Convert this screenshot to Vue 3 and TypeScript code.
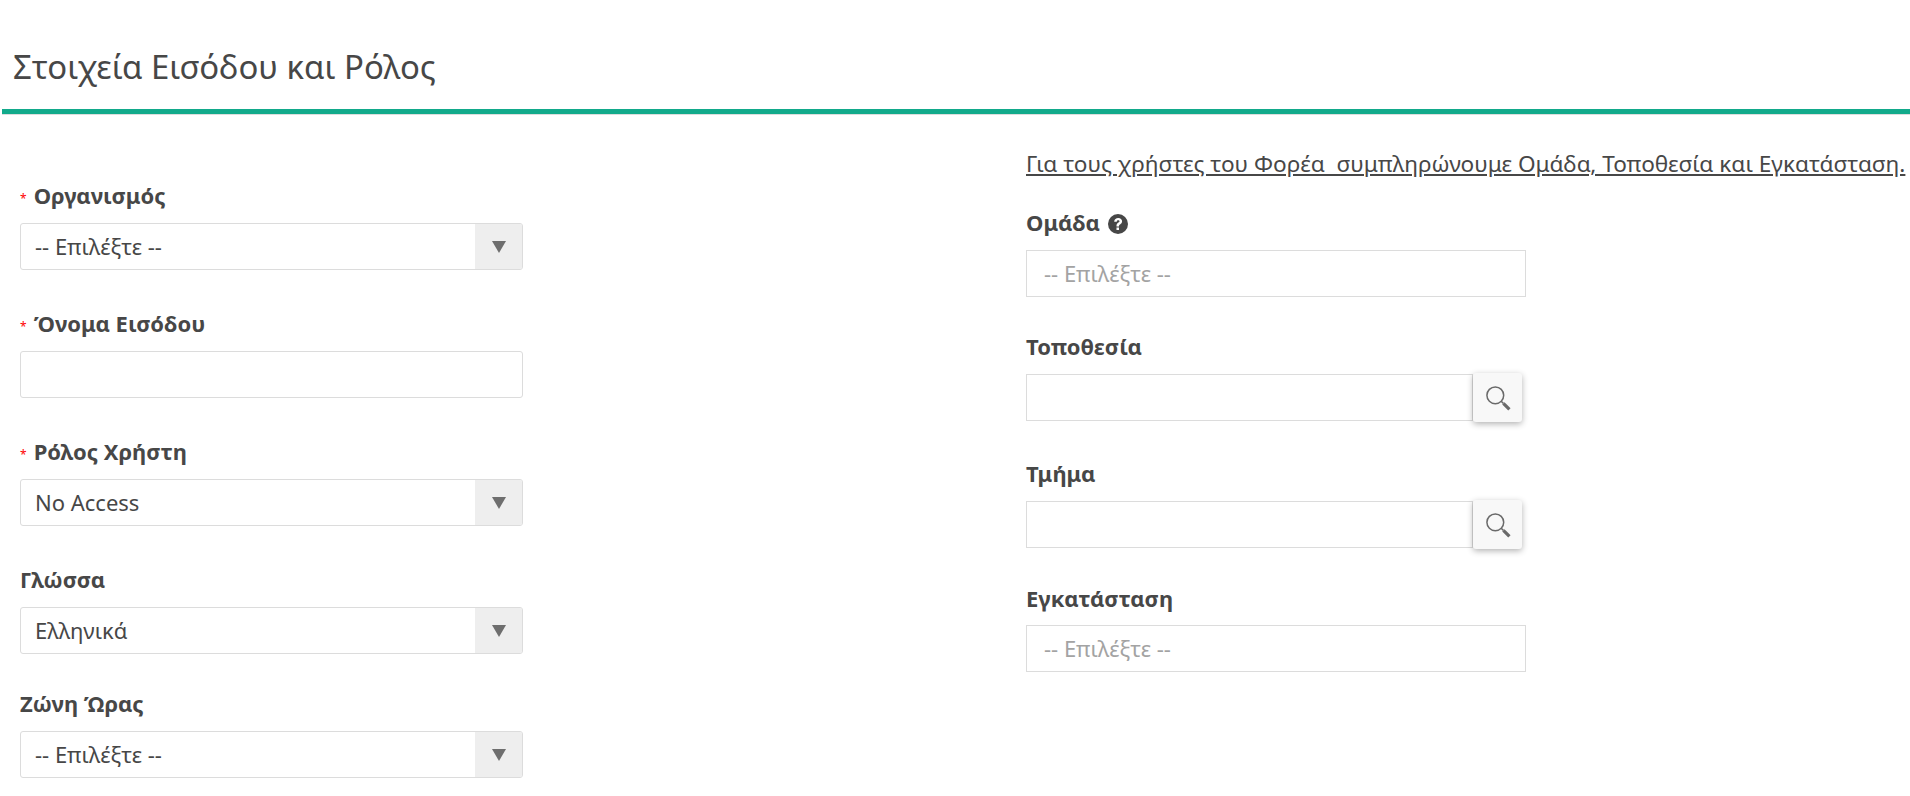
<script setup lang="ts">
const leftFields = [
  { label: 'Οργανισμός', required: true, value: '-- Επιλέξτε --' },
  { label: 'Όνομα Εισόδου', required: true, input: true, value: '' },
  { label: 'Ρόλος Χρήστη', required: true, value: 'No Access' },
  { label: 'Γλώσσα', required: false, value: 'Ελληνικά' },
  { label: 'Ζώνη Ώρας', required: false, value: '-- Επιλέξτε --' },
]
</script>

<template>
  <div class="page">
    <h1 class="title">Στοιχεία Εισόδου και Ρόλος</h1>

    <div class="columns">
      <div class="col-left">
        <div v-for="f in leftFields" :key="f.label" class="field">
          <label class="label"><span v-if="f.required" class="star">*</span>{{ f.label }}</label>
          <input v-if="f.input" class="box" type="text" />
          <div v-else class="box select">
            <span class="select-text">{{ f.value }}</span>
            <span class="select-arrow"><i></i></span>
          </div>
        </div>
      </div>

      <div class="col-right">
        <p class="note">Για τους χρήστες του Φορέα&nbsp; συμπληρώνουμε Ομάδα, Τοποθεσία και Εγκατάσταση.</p>

        <div class="rfield first">
          <label class="label">Ομάδα
            <svg class="help" viewBox="0 0 24 24" width="20" height="20">
              <circle cx="12" cy="12" r="12" fill="#474747" />
              <path d="M7.4 9.2C7.6 6.4 9.7 4.9 12.3 4.9c2.7 0 4.6 1.6 4.6 3.9 0 1.9-1.1 2.9-2.4 3.7-1 .6-1.3 1-1.3 2v.4h-3v-.8c0-1.8.7-2.7 2-3.5 1.1-.7 1.6-1.1 1.6-1.8 0-.8-.6-1.3-1.5-1.3-1 0-1.6.6-1.8 1.7z" fill="#fff" />
              <rect x="10.2" y="16.2" width="3" height="3" fill="#fff" />
            </svg>
          </label>
          <div class="rbox placeholder">-- Επιλέξτε --</div>
        </div>

        <div class="rfield">
          <label class="label">Τοποθεσία</label>
          <div class="lookup">
            <input class="rbox lookup-input" type="text" />
            <button class="lookup-btn" type="button">
              <svg viewBox="0 0 26 26" width="28" height="28" fill="none">
                <circle cx="10.5" cy="10.5" r="7.8" stroke="#6a6a6a" stroke-width="1.4" />
                <path d="M16 16l2 2" stroke="#6a6a6a" stroke-width="1.4" />
                <path d="M18 18l5.6 5.6" stroke="#6a6a6a" stroke-width="3" />
              </svg>
            </button>
          </div>
        </div>

        <div class="rfield third">
          <label class="label">Τμήμα</label>
          <div class="lookup">
            <input class="rbox lookup-input" type="text" />
            <button class="lookup-btn" type="button">
              <svg viewBox="0 0 26 26" width="28" height="28" fill="none">
                <circle cx="10.5" cy="10.5" r="7.8" stroke="#6a6a6a" stroke-width="1.4" />
                <path d="M16 16l2 2" stroke="#6a6a6a" stroke-width="1.4" />
                <path d="M18 18l5.6 5.6" stroke="#6a6a6a" stroke-width="3" />
              </svg>
            </button>
          </div>
        </div>

        <div class="rfield">
          <label class="label">Εγκατάσταση</label>
          <div class="rbox placeholder">-- Επιλέξτε --</div>
        </div>
      </div>
    </div>
  </div>
</template>

<style>
html,
body {
  margin: 0;
  background: #fff;
  overflow: hidden;
}
</style>

<style scoped>
.page {
  height: 796px;
  padding-left: 2px;
  font-family: "Noto Sans", "Open Sans", sans-serif;
  color: #474747;
  font-size: 22px;
}

.title {
  margin: 0;
  padding: 46px 0 0 11px;
  height: 63px;
  font-size: 32.9px;
  line-height: 42px;
  font-weight: 400;
  border-bottom: 5px solid #12aa8b;
  box-shadow: 0 1px 0 #ddd;
}

.columns {
  display: flex;
}

.col-left {
  width: 1024px;
  padding: 68px 0 0 18px;
  box-sizing: border-box;
}

.field {
  margin-bottom: 40px;
}

.field:nth-child(4) {
  margin-bottom: 36px;
}

.label {
  display: block;
  height: 26px;
  margin-bottom: 15px;
  font-weight: 700;
  line-height: 26px;
}

.star {
  color: #f00;
  font-size: 12px;
  font-weight: 400;
  margin-right: 7px;
  vertical-align: 1px;
}

.box {
  display: block;
  width: 503px;
  height: 47px;
  box-sizing: border-box;
  border: 1px solid #dcdcdc;
  border-radius: 3px;
  background: #fff;
  outline: none;
}

.select {
  display: flex;
  align-items: center;
  justify-content: space-between;
  padding-left: 14px;
  overflow: hidden;
}

.select-text {
  padding-bottom: 2px;
}

.select-arrow {
  width: 47px;
  height: 100%;
  background: #eee;
  display: flex;
  align-items: center;
  justify-content: center;
}

.select-arrow i {
  width: 0;
  height: 0;
  border-left: 7px solid transparent;
  border-right: 7px solid transparent;
  border-top: 12px solid #6e6e6e;
}

.col-right {
  flex: 1;
  padding-top: 37px;
}

.note {
  margin: 0;
  font-size: 22.6px;
  line-height: 26px;
  text-decoration: underline;
  white-space: nowrap;
}

.rfield {
  margin-top: 36px;
}

.rfield .label {
  margin-bottom: 14px;
}

.rfield.first {
  margin-top: 32px;
}

.rfield.first .label {
  margin-bottom: 15px;
}

.rfield.third {
  margin-top: 38px;
}

.help {
  vertical-align: -3px;
  margin-left: 2px;
}

.rbox {
  display: block;
  width: 500px;
  height: 47px;
  box-sizing: border-box;
  border: 1px solid #dcdcdc;
  background: #fff;
  outline: none;
}

.placeholder {
  padding-left: 17px;
  line-height: 45px;
  color: #a3a3a3;
}

.lookup {
  display: flex;
  align-items: center;
}

.lookup-input {
  width: 447px;
}

.lookup-btn {
  width: 49px;
  height: 49px;
  padding: 0;
  border: none;
  border-radius: 3px;
  background: #f8f8f8;
  box-shadow: 0 2px 6px rgba(0, 0, 0, 0.3);
  display: flex;
  align-items: center;
  justify-content: center;
}
</style>
